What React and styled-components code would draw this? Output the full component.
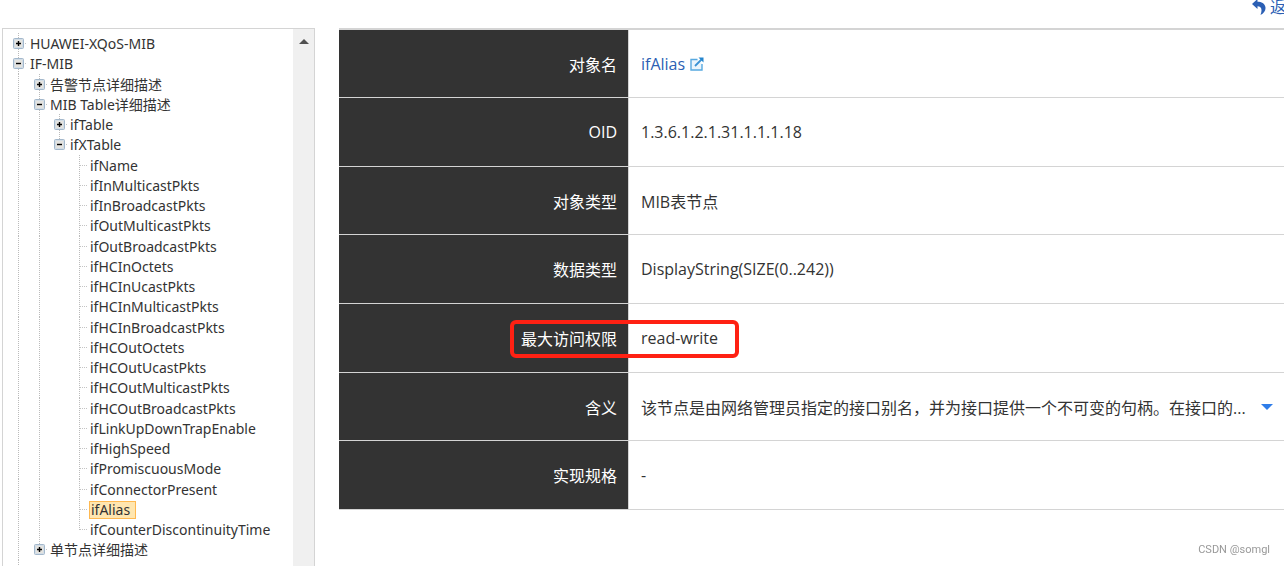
import React from 'react'
import styled, { createGlobalStyle } from 'styled-components'

const GlobalStyle = createGlobalStyle`
    * {
        box-sizing: border-box;
    }
    html, body {
        margin: 0;
        overflow: hidden;
        background-color: white;
        color: #333;
    }
    body {
        font-family: "Open Sans", "Noto Sans CJK SC", sans-serif;
        font-size: 16px;
    }
`;

const Page = styled.div`
    width: calc(100% + 20px);
    height: 100vh;
    display: flex;
    flex-direction: column;
`;

const TopBar = styled.header`
    height: 28px;
    flex-shrink: 0;
    display: flex;
    justify-content: flex-end;
    padding-right: 2px;
`;

const BackLink = styled.a`
    display: flex;
    gap: 4px;
    height: 14px;
    line-height: 14px;
    color: #2b5fb4;
    text-decoration: none;
    white-space: nowrap;
`;

const Content = styled.div`
    flex: 1;
    min-height: 0;
    display: flex;
    gap: 24px;
    padding-left: 2px;
`;

const Sidebar = styled.nav`
    width: 313px;
    flex-shrink: 0;
    display: flex;
    justify-content: space-between;
    overflow: hidden;
    border: 1px solid #d4d4d4;
    border-bottom: none;
`;

const Tree = styled.ul`
    margin: 0;
    padding: 5px 0 0 6px;
    list-style: none;
    font-family: "Noto Sans", "Noto Sans CJK SC", sans-serif;
    font-size: 14px;
    line-height: 20px;
    white-space: nowrap;
`;

const TreeRow = styled.li`
    height: 20px;
    display: flex;
    align-items: flex-end;
    &:nth-child(4n + 3) {
        height: 21px;
    }
`;

const GuideSvg = styled.svg`
    width: 20px;
    height: 21px;
    flex-shrink: 0;
`;

const TreeLink = styled.a`
    padding: 0 1px;
    color: inherit;
    text-decoration: none;
`;

const SelectedLink = styled(TreeLink)`
    height: 18px;
    margin-bottom: 1px;
    padding-right: 5px;
    line-height: 16px;
    background-color: #ffe6b0;
    border: 1px solid #ffb951;
`;

const ScrollTrack = styled.div`
    width: 21px;
    flex-shrink: 0;
    display: flex;
    justify-content: center;
    padding-top: 10px;
    background-color: #f0f0f0;
`;

const Detail = styled.main`
    flex: 1;
    min-width: 0;
`;

const DetailTable = styled.table`
    width: 100%;
    table-layout: fixed;
    border-collapse: separate;
    border-spacing: 0;
    border-top: 2px solid #d4d4d4;
`;

const DetailRow = styled.tr`
    height: 69px;
    &:first-child, &:nth-child(3n) {
        height: 68px;
    }
`;

const Name = styled.th`
    width: 290px;
    padding: 0 11px;
    background-color: #333;
    border-right: 1px solid #d4d4d4;
    border-bottom: 1px solid #d4d4d4;
    color: white;
    font-weight: 400;
    text-align: right;
`;

const Value = styled.td`
    padding: 0 0 0 12px;
    border-bottom: 1px solid #d4d4d4;
`;

const ObjectLink = styled.a`
    display: inline-flex;
    align-items: center;
    gap: 5px;
    color: #2b5fb4;
    text-decoration: none;
`;

const Summary = styled.div`
    display: flex;
    align-items: center;
    justify-content: space-between;
    padding-right: 31px;
    white-space: nowrap;
`;

const ExpandButton = styled.button`
    display: flex;
    padding: 0;
    background: none;
    border: none;
`;

const Marked = styled.span`
    position: relative;
`;

const RedFrame = styled.span`
    position: absolute;
    top: -8px;
    left: -11px;
    width: 229px;
    height: 38px;
    border: 4px solid #ff2113;
    border-radius: 6px;
    pointer-events: none;
`;

const Watermark = styled.div`
    position: fixed;
    right: 14px;
    bottom: 8px;
    color: #999;
    font-family: Roboto, sans-serif;
    font-size: 11px;
    line-height: 16px;
`;

const tree = [
    { label: 'HUAWEI-XQoS-MIB', depth: 0, box: 'plus' },
    { label: 'IF-MIB', depth: 0, box: 'minus' },
    { label: '告警节点详细描述', depth: 1, box: 'plus' },
    { label: 'MIB Table详细描述', depth: 1, box: 'minus' },
    { label: 'ifTable', depth: 2, box: 'plus' },
    { label: 'ifXTable', depth: 2, box: 'minus', last: true },
    ...[
        'ifName',
        'ifInMulticastPkts',
        'ifInBroadcastPkts',
        'ifOutMulticastPkts',
        'ifOutBroadcastPkts',
        'ifHCInOctets',
        'ifHCInUcastPkts',
        'ifHCInMulticastPkts',
        'ifHCInBroadcastPkts',
        'ifHCOutOctets',
        'ifHCOutUcastPkts',
        'ifHCOutMulticastPkts',
        'ifHCOutBroadcastPkts',
        'ifLinkUpDownTrapEnable',
        'ifHighSpeed',
        'ifPromiscuousMode',
        'ifConnectorPresent',
        'ifAlias',
        'ifCounterDiscontinuityTime',
    ].map((label) => ({
        label,
        depth: 3,
        selected: label === 'ifAlias',
        last: label === 'ifCounterDiscontinuityTime',
    })),
    { label: '单节点详细描述', depth: 1, box: 'plus', last: true },
];

const details = [
    { name: '对象名', value: 'ifAlias', type: 'link' },
    { name: 'OID', value: '1.3.6.1.2.1.31.1.1.1.18' },
    { name: '对象类型', value: 'MIB表节点' },
    { name: '数据类型', value: 'DisplayString(SIZE(0..242))' },
    { name: '最大访问权限', value: 'read-write', marked: true },
    {
        name: '含义',
        value: '该节点是由网络管理员指定的接口别名，并为接口提供一个不可变的句柄。在接口的...',
        type: 'summary',
    },
    { name: '实现规格', value: '-' },
];

const Guide = ({ level, own, box, last, blank }) => {
    return(
        <GuideSvg viewBox={level > 0 ? '-1 0 20 21' : '0 0 20 21'} aria-hidden="true">
            {!blank && <path d={last ? 'M9.5 0V11' : 'M9.5 0V21'} stroke="#bbb" strokeDasharray="1 1" />}
            {own && <path d="M10 10.5H18" stroke="#c4c4c4" strokeDasharray="1 1" />}
            {box && <g>
                <rect x="4.5" y="5.5" width="10" height="10" rx="1" fill="#e4e3df" stroke="#a3b8cc" />
                <rect x="5.5" y="6.5" width="8" height="8" fill="none" stroke="#d3dde6" />
                <path d={box === 'plus' ? 'M7 10.5H12M9.5 8V13' : 'M7 10.5H12'} stroke="#000" strokeWidth="1.4" />
            </g>}
        </GuideSvg>
    )
}

const Node = ({ item }) => {
    const Link = item.selected ? SelectedLink : TreeLink;
    return(
        <TreeRow>
            {Array.from({ length: item.depth + 1 }, (_, i) => (
                <Guide
                    key={i}
                    level={i}
                    own={i === item.depth}
                    box={i === item.depth && item.box}
                    last={i === item.depth && item.last}
                    blank={i === 2 && item.depth === 3}
                />
            ))}
            <Link href="#">{item.label}</Link>
        </TreeRow>
    )
}

const DetailValue = ({ item }) => {
    if (item.type === 'link') {
        return(
            <ObjectLink href="#">
                {item.value}
                <svg width="14" height="14" viewBox="0 0 14 14" fill="none" stroke="#3a92d4">
                    <path d="M7.5 2.5H1V13H12V7" fill="#eaf5fc" stroke="#57a9e0" strokeWidth="1.4" />
                    <path d="M5 9L11.5 2.5" strokeWidth="1.8" />
                    <path d="M8.5 0.5H13.5V5.5Z" fill="#2585cd" stroke="none" />
                </svg>
            </ObjectLink>
        )
    }
    if (item.type === 'summary') {
        return(
            <Summary>
                {item.value}
                <ExpandButton aria-label="展开">
                    <svg width="12" height="6" viewBox="0 0 12 6">
                        <path d="M0 0H12L6 6Z" fill="#2f7de9" />
                    </svg>
                </ExpandButton>
            </Summary>
        )
    }
    return item.value
}

const App = () => {
    return(
        <Page>
            <GlobalStyle />
            <TopBar>
                <BackLink href="#">
                    <svg width="14" height="15" viewBox="0 0 14 15">
                        <path d="M5.5 -1L0 4L5.5 9V6.2C9 6.2 10.8 9 8.5 15C12 13 14 10.5 13.4 7C12.8 3.5 9.5 1.8 5.5 1.8Z" fill="#2b5fb4" />
                    </svg>
                    返回
                </BackLink>
            </TopBar>
            <Content>
                <Sidebar>
                    <Tree>
                        {tree.map((item) => <Node key={item.label} item={item} />)}
                        <TreeRow aria-hidden="true"><Guide level={0} /></TreeRow>
                    </Tree>
                    <ScrollTrack>
                        <svg width="10" height="5" viewBox="0 0 10 5">
                            <path d="M0 5L5 0L10 5Z" fill="#505050" />
                        </svg>
                    </ScrollTrack>
                </Sidebar>
                <Detail>
                    <DetailTable>
                        <tbody>
                            {details.map((item) => (
                                <DetailRow key={item.name}>
                                    <Name scope="row">
                                        {item.marked ? <Marked>{item.name}<RedFrame /></Marked> : item.name}
                                    </Name>
                                    <Value><DetailValue item={item} /></Value>
                                </DetailRow>
                            ))}
                        </tbody>
                    </DetailTable>
                </Detail>
            </Content>
            <Watermark>CSDN @somgl</Watermark>
        </Page>
    )
}

export default App
